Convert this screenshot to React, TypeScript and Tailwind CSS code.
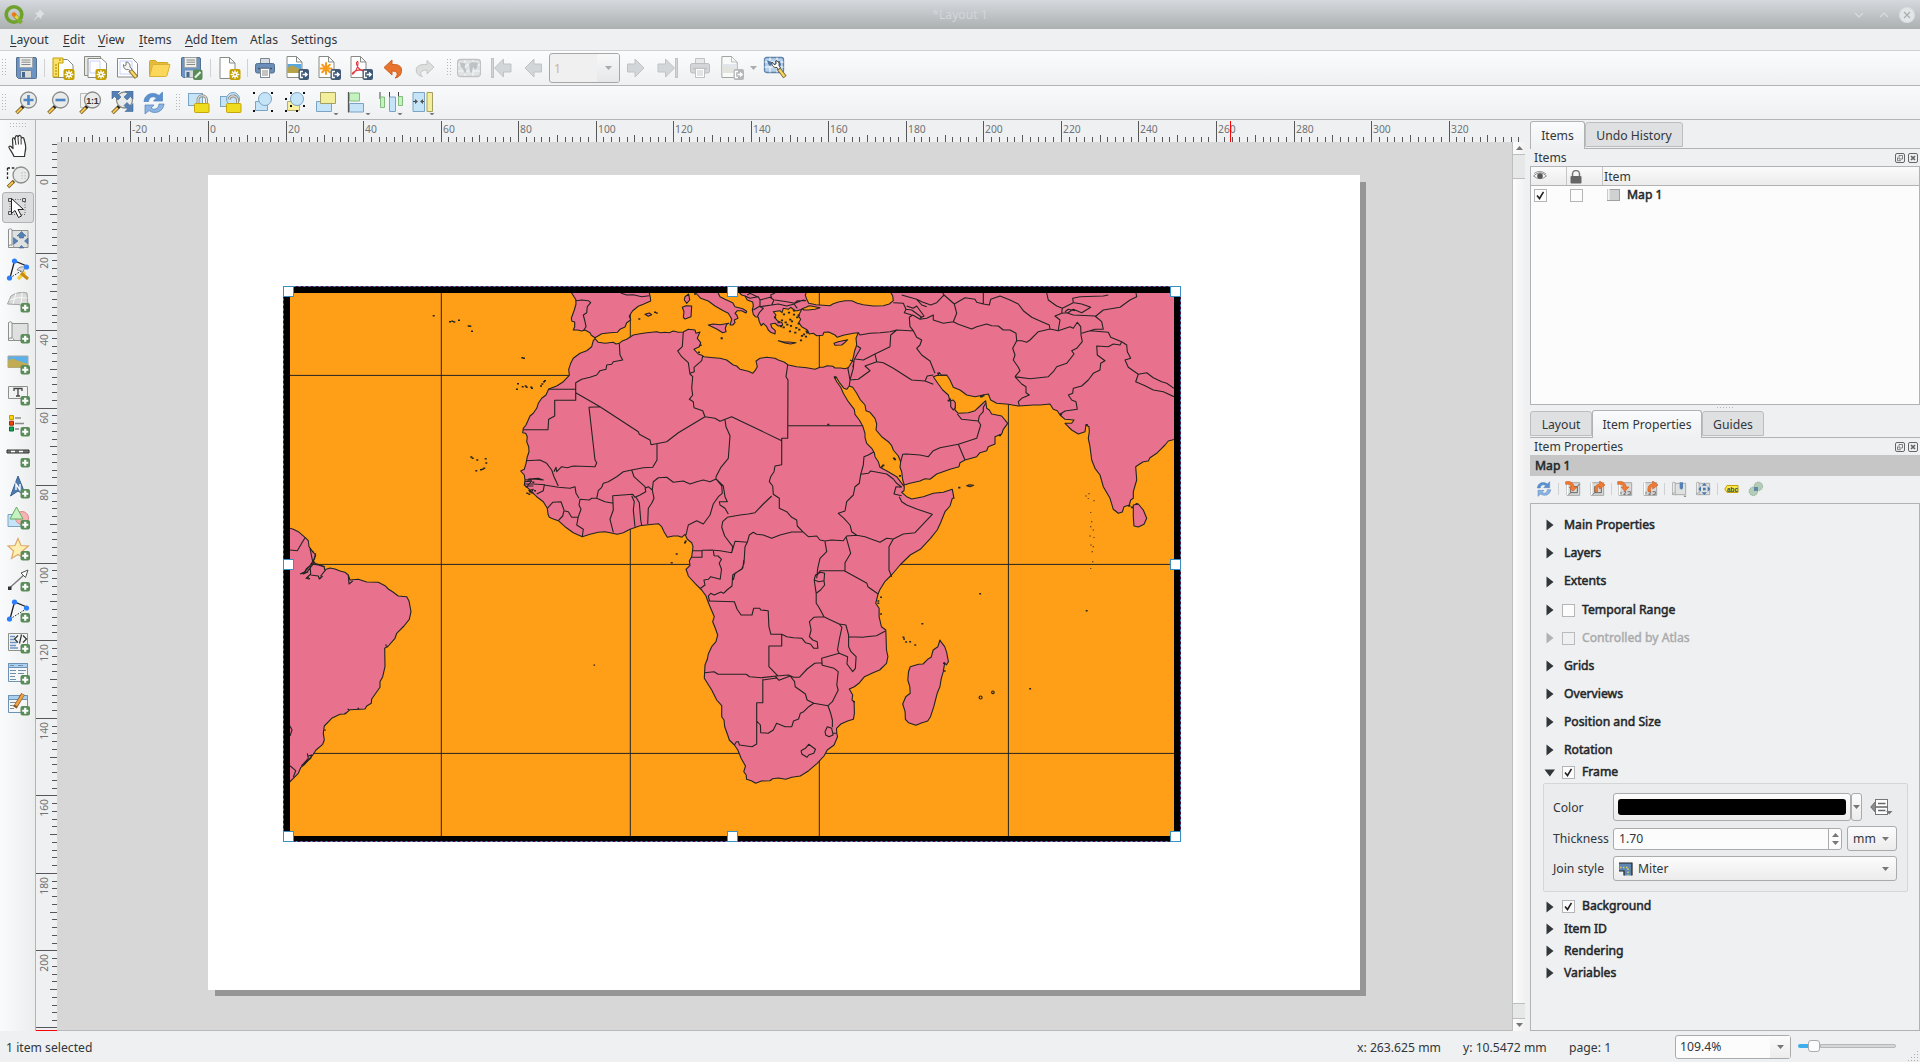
import React from "react";

type Kids = { children?: React.ReactNode };

/* ---------- icon primitives ---------- */

const Ic = ({ children, size = 24 }: Kids & { size?: number }) => (
  <svg width={size} height={size} viewBox="0 0 24 24" fill="none" className="block shrink-0">
    {children}
  </svg>
);

const Plus = () => (
  <g>
    <rect x="14.5" y="14" width="9.500" height="9.500" rx="2" fill="#5a8c5a" />
    <path d="M19.250 15.700v6.100M16.200 18.750h6.100" stroke="#fff" strokeWidth="2.200" />
  </g>
);
const Gear = () => (
  <g>
    <rect x="12.5" y="13" width="11" height="11" rx="2" fill="#c4a000" />
    <path d="M18 14.2v8.6M13.7 18.5h8.6M15 15.5l6 6M21 15.5l-6 6" stroke="#fff" strokeWidth="1.3" />
    <circle cx="18" cy="18.5" r="2.3" fill="#fff" />
    <circle cx="18" cy="18.5" r="1" fill="#c4a000" />
  </g>
);
const ExportBadge = ({ c = "#415a75" }: { c?: string }) => (
  <g>
    <rect x="13.5" y="13" width="10.5" height="11" rx="2" fill={c} />
    <path d="M18 15.5h-2.5v6H18M17.5 18.5h4.5M20 16.5l2.2 2-2.2 2" stroke="#fff" strokeWidth="1.3" />
  </g>
);
const Doc = () => (
  <path d="M4.5 1.5h9.5l5.5 5.5v15.5h-15zM14 1.5v5.5h5.5" fill="#fff" stroke="#888a85" />
);
const Glass = () => (
  <g>
    <path d="M9.5 15L2.5 22" stroke="#5c4a1c" strokeWidth="3.6" />
    <path d="M8 16.5L2.8 21.7" stroke="#fcc94d" strokeWidth="2" />
    <path d="M9.8 14.7l-2 2" stroke="#222" strokeWidth="3" />
    <circle cx="14.5" cy="9" r="8" fill="#e9eaea" stroke="#8a8c8a" strokeWidth="1.3" />
  </g>
);
const Drop = () => <path d="M18.5 22h5l-2.5 2.5z" fill="#777" />;

const Save = () => (
  <Ic>
    <path d="M3 1.5h18q1.5 0 1.500 1.500V21.500q0 1-1 1H4.500L2.500 20.500V2q0-.5.5-.5z" fill="#6b94c4" stroke="#56718f" />
    <rect x="5.500" y="1.500" width="13" height="10" fill="#eeeeec" stroke="#9a9c98" strokeWidth=".7" />
    <path d="M7.500 4h9M7.500 6.200h9M7.500 8.500h9" stroke="#888a85" />
    <rect x="6.500" y="14.500" width="11" height="7.500" rx="1" fill="#d8dad8" stroke="#56718f" strokeWidth=".7" />
    <rect x="8" y="16" width="3" height="5.500" fill="#47678d" />
  </Ic>
);
const SaveAs = () => (
  <Ic>
    <path d="M3 1.500h17q1.500 0 1.500 1.500v18.500h-17L2.500 20V2z" fill="#6b94c4" stroke="#56718f" />
    <rect x="5.500" y="1.500" width="12" height="10" fill="#eeeeec" stroke="#9a9c98" strokeWidth=".7" />
    <path d="M7.500 4h8.500M7.500 6.200h8.500M7.500 8.500h8.500" stroke="#888a85" />
    <rect x="6" y="14.500" width="8" height="7" fill="#d8dad8" />
    <rect x="7.500" y="16" width="3" height="5" fill="#47678d" />
    <rect x="14" y="13.500" width="9.500" height="10.500" rx="2" fill="#5a8c5a" />
    <path d="M16 21.500l5.500-5.500" stroke="#e4f3e4" strokeWidth="2.200" />
  </Ic>
);
const NewLayout = () => (
  <Ic>
    <path d="M2.500 3.500h14l5.500 5.500v12.500H2.500z" fill="#fff" stroke="#888a85" />
    <path d="M2 2h10v5H7.500v14H2z" fill="#fce069" stroke="#c4a000" />
    <path d="M4 9h2M4 12h2M4 15h2M4 18h2M9 3v2" stroke="#a08300" />
    <Gear />
  </Ic>
);
const DupLayout = () => (
  <Ic>
    <path d="M1.500.500h16v19h-16z" fill="#e6e7e6" stroke="#888a85" />
    <path d="M5 2.500h13.500l5 4.500v14.500H5z" fill="#fff" stroke="#888a85" />
    <path d="M7 5h10v12H7z" stroke="#c6d2ff" />
    <Gear />
  </Ic>
);
const Manager = () => (
  <Ic>
    <path d="M2.500 2.500h15l5 5v13.500h-20z" fill="#fff" stroke="#888a85" />
    <path d="M5 5h12v13H5z" stroke="#c6d2ff" />
    <path d="M15 14l6.500 7.500" stroke="#8a7332" strokeWidth="4.200" />
    <path d="M15.500 14.500l5.500 6.500" stroke="#fbd968" strokeWidth="2.400" />
    <path d="M8.500 8.500a4 4 0 0 0 5 5l2 1.500 1.500-2-2-2a4 4 0 0 0-4-5v3l-1.500 1z" fill="#f3f3f2" stroke="#77797a" />
  </Ic>
);
const Folder = () => (
  <Ic>
    <path d="M2.500 20V5.500q0-1 1-1h5l2 2h9.500q1 0 1 1V10" fill="#e5bb3c" stroke="#d3a829" />
    <path d="M2.500 20.500L5.500 9.500q.3-1 1.300-1H23L20 19.500q-.3 1-1.300 1z" fill="#fbd75c" stroke="#d9b137" />
  </Ic>
);
const NewPage = () => (<Ic><g transform="translate(-1.500 0)"><Doc /></g><Gear /></Ic>);
const Printer = ({ gray }: { gray?: boolean }) => (
  <Ic>
    <path d="M7.500 9V2.500h9V9" fill={gray ? "#e8e9ea" : "#d7dde5"} stroke={gray ? "#c0c2c4" : "#7b8791"} />
    <rect x="2.500" y="7.500" width="19" height="9.500" rx="1.800" fill={gray ? "#d3d5d8" : "#6b8fb9"} stroke={gray ? "#bbbdc0" : "#52708f"} />
    <path d="M5 12.500h14" stroke={gray ? "#bcbec1" : "#3e5570"} strokeWidth="1.500" />
    <rect x="7.500" y="12.500" width="9" height="9" fill="#fff" stroke={gray ? "#c0c2c4" : "#7b8791"} />
    <path d="M9 15h6M9 17h6M9 19h6" stroke={gray ? "#c6c8ca" : "#888a85"} />
  </Ic>
);
const ExportImg = ({ gray }: { gray?: boolean }) => (
  <Ic>
    <g transform="translate(-2.500 -1)">
      <Doc />
      <rect x="5" y="9" width="14" height="9" fill={gray ? "#cfdbe3" : "#58a7e0"} />
      <path d="M5 13q4-4 7-1.500l7 3V18H5z" fill={gray ? "#d4d4c8" : "#b8a14b"} />
      {gray && <path d="M4.500 1.500h15v21h-15z" fill="#f3f4f5" opacity=".5" />}
    </g>
    <ExportBadge c={gray ? "#b4b7ba" : "#415a75"} />
  </Ic>
);
const ExportSvg = () => (
  <Ic>
    <g transform="translate(-2.500 -1)">
      <Doc />
      <path d="M11.500 8v11M6 13.500h11M7.700 9.700l7.600 7.600M15.300 9.700l-7.600 7.600" stroke="#f59a1b" strokeWidth="2" strokeLinecap="round" />
    </g>
    <ExportBadge />
  </Ic>
);
const ExportPdf = () => (
  <Ic>
    <g transform="translate(-2.500 -1)">
      <Doc />
      <path d="M10.500 7c-1.500 0 0 5 2.500 7s5 2.500 5 1.500-7-1-10 1-2.500 3-1.500 2.500S11.500 13 11.500 9s-.500-2-1-2z" stroke="#e0383e" strokeWidth="1.100" />
    </g>
    <ExportBadge />
  </Ic>
);
const Undo = () => (
  <Ic>
    <path d="M3 11.500L11 4v4.500c7-.5 11 2 9 9-1 2.500-3 4-6 4.500 3-2.500 3.500-7-3-7V19z" fill="#e8732f" stroke="#d0611f" />
  </Ic>
);
const Redo = () => (
  <Ic>
    <path d="M21 11L14 4.500V8.500C7 8 2 10 3.500 16c.8 2.500 3 4 6 4.500-3-2.500-2.500-6.500 4.500-6.500v4z" fill="#dcdfdd" stroke="#c3c6c4" />
  </Ic>
);
const AtlasIcon = ({ tool }: { tool?: boolean }) => (
  <Ic>
    {tool ? (
      <g>
        <rect x="1.500" y="1.500" width="19" height="15" rx="2" fill="#b5d0ec" stroke="#5f82a9" strokeWidth="1.300" />
        <path d="M1.500 6h19M1.500 11h19M7 1.500v15M14 1.500v15" stroke="#fff" />
        <path d="M4 4.500l4 1 1 2-2 3-2-3zM12 5h5l1 4-3 4-2-3z" fill="#5275a0" />
        <path d="M15 12l7 9" stroke="#70643a" strokeWidth="4" />
        <path d="M15.500 12.500l6 8" stroke="#f7d75d" strokeWidth="2.300" />
        <path d="M9 6a4.300 4.300 0 0 0 5 5.500l1.500 2 2-1.500-1.500-2.500A4 4 0 0 0 13 4.500V8l-2 .5z" fill="#fff" stroke="#444" />
      </g>
    ) : (
      <g>
        <rect x=".500" y="3.500" width="23" height="17" rx="3" fill="#e0e3e5" stroke="#c0c3c5" strokeWidth="1.300" />
        <path d="M1 9h22M1 15h22M8 4v16M16 4v16" stroke="#f6f7f7" />
        <path d="M3 6.500l6 1-1.500 3.500 2 3-1.500 4-2-5-2.500-3zM12 8l3-2 6 1-1 5-2 2-2-3-1 6-2-1-.5-5z" fill="#bfc2c4" />
      </g>
    )}
  </Ic>
);
const Arrow = ({ dir, bar }: { dir: "l" | "r"; bar?: boolean }) => (
  <Ic>
    <g transform={dir === "r" ? "matrix(-1 0 0 1 24 0)" : undefined} fill="#d3d6d9" stroke="#c0c3c6">
      {bar && <rect x="2.500" y="2.500" width="2" height="19" />}
      <path d={bar ? "M5.500 12L14.500 3v5h7.500v8h-7.500v5z" : "M4 12L13 3v5h7.500v8H13v5z"} />
    </g>
  </Ic>
);
const ZoomIn = () => (<Ic><Glass /><path d="M14.500 4v10M9.500 9h10" stroke="#4a86c5" strokeWidth="2.600" /></Ic>);
const ZoomOut = () => (<Ic><Glass /><path d="M9.500 9h10" stroke="#4a86c5" strokeWidth="2.600" /></Ic>);
const ZoomOne = () => (
  <Ic>
    <path d="M2.500 2.500h8v14h-8z" fill="#f3f3f3" stroke="#b8bab8" />
    <Glass />
    <text x="8.300" y="12.500" fontSize="9" fontWeight="bold" fill="#333" fontFamily="Liberation Sans" textLength="12.500">1:1</text>
  </Ic>
);
const ZoomFull = () => (
  <Ic>
    <Glass />
    <path d="M2 0h8l-2.500 2.500L11 6 8 9 4.500 5.500 2 8zM23 0h-8l2.500 2.500L14 6l3 3 3.500-3.500L23 8zM23 20.500h-8l2.500-2.500-3.500-3.500 3-3 3.500 3.500 2.500-2.500z" fill="#5580b4" stroke="#3f6797" strokeWidth=".6" />
  </Ic>
);
const Refresh = ({ size }: { size?: number }) => (
  <Ic size={size}>
    <path d="M2 10.500C2.500 3 11 0 17 4.500l3.500-3.500V10h-9l3-3C11 4.500 7 6 6.500 10.500z" fill="#5c91cf" stroke="#4a7fbe" strokeWidth=".7" />
    <path d="M22 13C21.500 20.500 13 24 7 19.500L3 23V14h9l-3 3c3.500 2.500 7.500 1 8-4z" fill="#8db4e0" stroke="#4a7fbe" strokeWidth=".7" />
  </Ic>
);
const Lock = ({ open }: { open?: boolean }) => (
  <Ic>
    {open ? (
      <g fill="#c6e4f8" stroke="#7ba4c4"><rect x="1.500" y="5.500" width="11" height="10" /><circle cx="14" cy="8" r="6.500" /></g>
    ) : (
      <rect x="1.500" y="2.500" width="14" height="12" fill="#c6e4f8" stroke="#7ba4c4" />
    )}
    <path d={open ? "M10 8.500a4 4 0 0 1 8.500 1.500v4" : "M11 13V9a4 4 0 0 1 8.500 0v4"} stroke="#8b8d8a" strokeWidth="3" />
    <path d={open ? "M10 8.500a4 4 0 0 1 8.500 1.500v4" : "M11 13V9a4 4 0 0 1 8.500 0v4"} stroke="#e4e5e3" strokeWidth="1.200" />
    <rect x="7.500" y="12.500" width="14.500" height="9" rx="1" fill="#f0dc1e" stroke="#c2a60b" />
  </Ic>
);
const Group = () => (
  <Ic>
    <path d="M4.500 10.500h12v9h-12z" fill="#c6e4f8" stroke="#7ba4c4" />
    <circle cx="14" cy="8" r="6.500" fill="#c6e4f8" stroke="#7ba4c4" />
    <path d="M2 1h2v2H2zM20 1h2v2h-2zM2 19h2v2H2zM20 19h2v2h-2z" fill="#111" />
  </Ic>
);
const Ungroup = () => (
  <Ic>
    <path d="M4.500 10.500h12v9h-12z" fill="#f7f0a0" stroke="#b5ac6d" />
    <circle cx="14" cy="8" r="6.500" fill="#c6e4f8" stroke="#7ba4c4" />
    <path d="M7 1h2v2H7zM20 1h2v2h-2zM2 7h2v2H2zM7 14h2v2H7zM2 19h2v2H2zM13 19h2v2h-2zM20 14h2v2h-2z" fill="#111" />
  </Ic>
);
const Raise = () => (
  <Ic>
    <path d="M1.500 10.500h15v10h-15z" fill="#c6e4f8" stroke="#7ba4c4" />
    <path d="M5.500 1.500h15v11h-15z" fill="#f3ee9b" stroke="#a39f63" />
    <Drop />
  </Ic>
);
const Align = () => (
  <Ic>
    <path d="M1.500 1v20.500" stroke="#555" strokeWidth="1.300" />
    <path d="M2.500 2h10v8h-10z" fill="#c5f3c0" stroke="#83bb80" />
    <path d="M2.500 12.500h14v8.500h-14z" fill="#c6e4f8" stroke="#7ba4c4" />
    <Drop />
  </Ic>
);
const Distribute = () => (
  <Ic>
    <path d="M1 1v7M10.500 1v7M19.500 1v6" stroke="#444" />
    <path d="M1.500 6h4v10.500h-4zM19.500 5.500h4v9h-4z" fill="#c5f3c0" stroke="#83bb80" />
    <path d="M10.500 6h6v14.500h-6z" fill="#c6e4f8" stroke="#7ba4c4" />
    <Drop />
  </Ic>
);
const Resize = () => (
  <Ic>
    <path d="M2 1.500h11.500v19H2z" fill="#c6e4f8" stroke="#7ba4c4" />
    <path d="M16 1.500h5.500v19H16z" fill="#f3ee9b" stroke="#a39f63" />
    <path d="M2 10.500h3M13 10.500h-3" stroke="#444" /><path d="M4 8l3 2.500L4 13zM12 8l-3 2.500 3 2.500z" fill="#555" />
    <Drop />
  </Ic>
);

/* left tool box */
const Hand = () => (
  <Ic>
    <path d="M8 22.500C7 20 5 17 3.500 14.500 2 12.500 3.500 11.500 5 12.500l2 2L6.500 5.500c0-2 2-2 2.300-.3L9.500 3c.3-1.800 2.200-1.800 2.400 0l.6-.5c.4-1.500 2.300-1.300 2.500.3l.5 1.400c.8-1 2.200-.7 2.500.8l1.500 6c.6 3 .2 5-.5 7.500l-.5 4z" fill="#fff" stroke="#333" strokeWidth="1.200" strokeLinejoin="round" />
    <path d="M9 5l1 6M12 3.500l.5 7M15 4.500l.2 6" stroke="#333" />
  </Ic>
);
const ZoomTool = () => (
  <Ic>
    <path d="M1.500 3h9M1.500 3v13" stroke="#222" strokeDasharray="2.500 1.800" strokeWidth="1.300" />
    <path d="M8 16l-6 6" stroke="#6a5620" strokeWidth="3.400" /><path d="M7 17l-4.500 4.500" stroke="#fcc94d" strokeWidth="1.800" />
    <circle cx="15" cy="10" r="8" fill="#e8e9e9" stroke="#8a8c8a" strokeWidth="1.300" />
    <path d="M16 7v7M19 7v7" stroke="#bbb" strokeDasharray="1.500 1.500" />
  </Ic>
);
const SelectTool = () => (
  <Ic>
    <path d="M4 3.500h15v15H4z" stroke="#666" strokeDasharray="1 1.500" />
    <path d="M2.500 2.500h3v3h-3zM16.500 2.500h3v3h-3zM2.500 15.500h3v3h-3z" fill="#ddd" stroke="#555" />
    <path d="M5.500 2.500v15l3.500-3 3.500 7 3-1.500-3.500-6.500h5.500z" fill="#fff" stroke="#222" strokeLinejoin="round" />
  </Ic>
);
const MapArt = () => (
  <g>
    <path d="M5.500 3.500h16.500v17H5.500z" fill="#dfe0e0" stroke="#8e908e" />
    <path d="M2.500 2.500q2-1.500 3.500 0v15.500H4q-2 0-1.500 2.500z" fill="#f6f6f6" stroke="#8e908e" />
    <path d="M2.500 20.500h5q1-1.500-1-2.500" fill="#f6f6f6" stroke="#8e908e" />
  </g>
);
const MoveContent = () => (
  <Ic>
    <MapArt />
    <path d="M15.500 4.500l4.500 4.500h-2.500v2h-4V9H11zM15.500 18.500l2.500 2.500h-5zM7.500 10.500l4.500 3.500-4.500 3.500zM22 11l-3.500 3 3.500 3z" fill="#5580b4" stroke="#3f6797" strokeWidth=".6" />
  </Ic>
);
const NodeDots = () => (
  <g fill="#2a7fff"><circle cx="8.500" cy="3" r="2.600" /><circle cx="20.500" cy="9" r="2.600" /><circle cx="3.500" cy="20" r="2.600" /></g>
);
const EditNodes = () => (
  <Ic>
    <path d="M4 20L8.500 3 22 8.500" stroke="#222" strokeWidth="1.300" /><path d="M4 20L22 8.500" stroke="#222" strokeDasharray="1.500 1.500" />
    <path d="M12 21l7-7" stroke="#f3cf35" strokeWidth="3.200" /><path d="M22 21l-7-6" stroke="#c98a12" strokeWidth="3" />
    <path d="M11 12q2-4 8-3l-2 5q-3-2-6-2z" fill="#d7d8d7" stroke="#8e908e" />
    <NodeDots />
  </Ic>
);
const Map3D = () => (
  <Ic>
    <path d="M5 7q7-5 16-3l1 13q-10-2-20.500-2z" fill="#d9dada" stroke="#a0a2a0" />
    <path d="M3.500 11q9-4 18-2M10 4L7 15M16 3.500L15 16" stroke="#f8f8f8" />
    <Plus />
  </Ic>
);
const AddMap = () => (<Ic><MapArt /><Plus /></Ic>);
const AddPic = () => (
  <Ic>
    <path d="M2 5h20v11.500H2z" fill="#5bb0ea" stroke="#a4a6a4" /><path d="M2 10q4-4 8-1l12 4v3.500H2z" fill="#c2ac53" />
    <Plus />
  </Ic>
);
const AddLabel = () => (
  <Ic>
    <path d="M2.500 4.500h19v12h-19z" fill="#f2f2f2" stroke="#8e908e" />
    <path d="M8 9V6.500h8V9M12 6.500v7.500M10 14h4" stroke="#444" strokeWidth="1.300" />
    <Plus />
  </Ic>
);
const AddLegend = () => (
  <Ic>
    <path d="M3.500 2.500h4v4h-4z" fill="#fcd20b" stroke="#c79a00" /><path d="M3.500 8.200h4v4h-4z" fill="#f0440c" stroke="#a12c00" /><path d="M3.500 14h4v4h-4z" fill="#10a754" stroke="#066b32" />
    <path d="M9 5h6M9 10.500h9M9 16h4" stroke="#8a8c8a" strokeWidth="1.500" />
    <Plus />
  </Ic>
);
const AddScale = () => (
  <Ic>
    <path d="M1 6h22v3H1z" fill="#777" stroke="#333" /><path d="M5 7.500h4M13 7.500h4" stroke="#fff" strokeWidth="1.500" />
    <Plus />
  </Ic>
);
const AddNorth = () => (
  <Ic>
    <path d="M12 1L20 21l-8-5-7.500 5z" fill="#4f7cb0" stroke="#3a6191" />
    <path d="M10 15V9l4 6V9" stroke="#fff" strokeWidth="1.400" />
    <Plus />
  </Ic>
);
const AddShape = () => (
  <Ic>
    <path d="M2 8.500h13v12H2z" fill="#c6e4f8" stroke="#7ba4c4" /><circle cx="16" cy="12" r="6.500" fill="#f6b5b5" stroke="#dc8a8a" />
    <path d="M10.500 1L17 13H4z" fill="#c5f3c0" stroke="#68a965" />
    <Plus />
  </Ic>
);
const AddMarker = () => (
  <Ic>
    <path d="M12 1.500l3 7 7.500.500-6 5 2 7.500-6.500-4-6.500 4 2-7.500-5.500-5 7-.500z" fill="#fdeeb2" stroke="#e0a868" strokeWidth="1.200" />
    <Plus />
  </Ic>
);
const AddArrow = () => (
  <Ic>
    <path d="M3.500 20L19 6" stroke="#777" strokeWidth="1.300" /><path d="M2 18.500h3.500V22H2z" fill="#333" /><path d="M22 2l-7 3 4.500 4.500z" fill="#fff" stroke="#555" />
    <Plus />
  </Ic>
);
const AddNode = () => (
  <Ic>
    <path d="M4 20L8.500 3 22 8.500" stroke="#222" strokeWidth="1.300" /><path d="M4 20L21 9.500" stroke="#222" strokeDasharray="1.500 1.500" />
    <NodeDots />
    <Plus />
  </Ic>
);
const AddHtml = () => (
  <Ic>
    <path d="M2.500 3.500h19v17h-19z" fill="#f4f4f4" stroke="#8e908e" />
    <path d="M4 6.500h5M4 9.500h4M4 12.500h7M4 15.500h6M4 18h8" stroke="#6b94c4" strokeWidth="1.500" />
    <path d="M12 5.500L8.500 9 12 12.500M17 5.500L20.500 9 17 12.500M15.500 4.500L13.500 13.500" stroke="#333" strokeWidth="1.200" />
    <Plus />
  </Ic>
);
const AddTable = () => (
  <Ic>
    <path d="M2.500 2.500h19v18h-19z" fill="#f6f6f6" stroke="#6d92b5" /><path d="M2.500 2.500h19v4h-19z" fill="#aad0ef" stroke="#6d92b5" />
    <path d="M4 4.500h4M12 4.500h5M4 9.500h6M12 9.500h8M4 12.500h6M12 12.500h6M4 15.500h5M4 18.500h6" stroke="#6f8fae" />
    <Plus />
  </Ic>
);
const AddManual = () => (
  <Ic>
    <path d="M2.500 3.500h19v17h-19z" fill="#f6f6f6" stroke="#6d92b5" /><path d="M2.500 3.500h19v4h-19z" fill="#aad0ef" stroke="#6d92b5" />
    <path d="M4 10.500h6M4 13.500h5M4 16.500h4" stroke="#8a8c8a" />
    <path d="M9 15.500L17 2" stroke="#8b5a1e" strokeWidth="4" /><path d="M10 13.500L17 2.500" stroke="#f0a54a" strokeWidth="2.400" />
    <Plus />
  </Ic>
);

/* item property tool icons */
const Frame = ({ k }: { k: "in" | "out" | "nin" | "nout" }) => (
  <Ic size={16}>
    <path d="M3 2.500h19v19H3z" fill="#d7d8d8" stroke="#9c9e9c" strokeWidth="1.300" />
    <path d="M4 2v19" stroke="#fff" strokeWidth="2" />
    {k === "in" || k === "out" ? <path d="M8.500 8.500h10v9h-10zM18.500 8.500l3-4M8.500 17.500l-3 3" stroke="#555" strokeWidth="1.300" /> : <path d="M6 20v-4M10 16h3v2l-3 2h3M16 16h4v4h-4" stroke="#666" strokeWidth="1.300" />}
    {k === "in" || k === "nin" ? (
      <path d="M1 1q11-2 13 8h4l-6 6.500L6 9h4Q9 4 1 5z" fill="#ef7b35" stroke="#d0611f" />
    ) : (
      <path d="M9 16Q7.500 5 16 4.500V0l8 6-8 6V8q-4 .5-3 8z" fill="#ef7b35" stroke="#d0611f" />
    )}
  </Ic>
);

const Chevron = ({ c = "#777" }: { c?: string }) => (
  <svg width="7" height="4" viewBox="0 0 7 4" className="block shrink-0"><path d="M0 0h7L3.500 4z" fill={c} /></svg>
);

const Handle = ({ w }: { w: string }) => (
  <div className={`${w} flex h-full shrink-0 items-center`}>
    <svg width="7" height="20" className="block">
      <g fill="#b4b6b8">
        {[0, 1, 2, 3, 4, 5].map((i) => (
          <g key={i}><rect x="2" y={1 + i * 3} width="1" height="1" /><rect x="5" y={1 + i * 3} width="1" height="1" /></g>
        ))}
      </g>
    </svg>
  </div>
);
const Sep = ({ w }: { w: string }) => (
  <div className={`${w} flex shrink-0 justify-center`}><div className="h-[18px] w-px bg-[#cfd1d3]" /></div>
);
const Cell = ({ children }: Kids) => <div className="flex w-8 shrink-0 items-center justify-center pr-px">{children}</div>;

/* ---------- map geometry ---------- */

/* Each sheet is digitised in its own local units: origin x, origin y, units per pixel in x and y. */
const sheets = {
  A: [280, 280, 3, 3],
  B: [720, 280, 3, 3],
  C: [280, 500, 3, 3],
  D: [660, 520, 2.958, 3],
} as const;
type Sheet = keyof typeof sheets;

const project = (s: Sheet, pts: string) => {
  const [ox, oy, kx, ky] = sheets[s];
  return pts
    .trim()
    .split(/\s+/)
    .map((p) => {
      const [x, y] = p.split(",").map(Number);
      return `${(ox + x / kx).toFixed(1)} ${(oy + y / ky).toFixed(1)}`;
    })
    .join("L");
};
const ring = (...parts: [Sheet, string][]) => "M" + parts.map(([s, p]) => project(s, p)).join("L") + "Z";
const lines = (s: Sheet, list: string[]) => list.map((l) => "M" + project(s, l)).join("");

const mainland =
  ring(
    ["B", "50,30 65,45 75,48 82,60 98,66 100,78 97,90 100,103 106,110 115,112 118,125 124,137 130,130 140,140 145,150 152,157 165,162 166,152 155,142 152,132 165,130 175,138 188,136 186,128 172,122 164,112 168,105 160,95 180,92 186,98 190,85 205,88 212,82 225,92 232,92 245,88 240,98 235,108 242,118 236,128 245,140 262,150 268,162 280,160 290,167 308,166 312,157 326,156 345,165 352,172 370,166 385,163 400,160 415,158 408,175 410,195 404,212 400,232 396,245 385,263 374,266 362,264 345,264 338,259 322,257 310,262 300,262 285,268 260,263 230,260 205,255 192,246 175,240 165,235 140,232 120,235 108,243 112,260 105,272 98,280 85,274 60,268 50,258 40,255 20,240 0,235"],
    ["A", "1300,233 1272,230 1265,226 1255,222 1242,208 1258,200 1262,188 1252,175 1256,164 1260,156 1248,160 1245,150 1225,148 1210,156 1195,157 1180,153 1168,158 1155,157 1142,158 1130,155 1100,158 1080,161 1060,165 1040,178 1025,184 1018,190 1008,192 1000,187 975,190 955,187 945,176 940,182 935,200 920,212 900,220 880,235 872,250 866,268 868,286 850,305 830,318 806,327 798,345 785,355 775,370 770,385 760,400 750,408 738,435 730,445 728,458 737,460 742,470 740,485 746,500 747,515 742,530 738,550 733,568 722,573 733,585 735,600 733,615 745,625 760,640 770,650 790,665 802,685 804,703 808,712 820,717 835,722 855,740 880,758 907,770 930,763 955,757 975,755 990,758 1012,763 1030,758 1050,748 1080,737 1105,734 1135,731 1145,740 1152,755 1162,772 1180,768 1195,768 1205,772 1215,763 1222,778 1235,788 1239,800 1235,830 1228,843 1230,856 1218,868 1222,878"],
    ["C", "1225,228 1245,250 1265,270 1278,288 1284,305 1292,325 1303,350 1298,365 1306,385 1313,405 1308,425 1295,440 1285,462 1282,478 1275,495 1273,535 1295,570 1310,600 1325,617 1325,650 1332,660 1334,680 1343,705"],
    ["D", "205,660 220,675 230,690 240,715 253,738 248,755 255,765 256,778 270,782 283,790 300,783 325,782 333,776 350,774 372,778 390,772 415,768 440,752 465,730 485,708 495,690 515,675 525,650 523,640 522,625 535,612 555,603 572,598 575,580 574,545 568,540 570,525 560,507 575,500 590,488 605,470 630,458 650,450 670,430 674,410 670,390 668,330 655,320 648,290 648,265 638,250 645,222 650,210 665,185 685,165 710,135 740,105 770,88 800,55 820,30 830,8"],
    ["B", "675,695 690,678 697,655 702,655 697,628 670,637 640,640 610,650 575,657 560,650 545,637 552,632 553,620 545,610 530,590 505,575 480,562 475,545 465,530 463,518 455,505 440,490 435,472 435,460 428,438 418,420 405,403 403,388 385,365 370,340 362,322 350,305 343,290 348,290 358,307 372,325 380,328 388,318 398,322 410,340 420,358 435,375 438,392 450,397 465,415 470,432 468,450 485,470 505,485 515,497 520,510 535,528 542,545 540,562 545,575 548,600 553,615 570,610 600,603 615,596 630,598 650,582 690,568 717,560 720,548 735,540 770,530 780,518 800,512 805,500 825,492 825,470 845,462 850,448 863,430 845,408 815,402 808,390 800,385 797,362 780,378 765,392 745,398 715,400 705,390 705,378 690,362 685,345 668,330 655,312 640,290 655,285 658,278 664,285 680,285 690,300 700,322 720,330 740,345 765,350 790,345 805,342 812,360 830,370 865,373 895,378 940,375 960,375 990,372 1000,388 1012,392 1020,405 1035,418 1062,420 1055,430 1035,430 1055,450 1075,462 1095,455 1098,435 1107,440 1108,455 1105,475 1110,500 1115,540 1125,565 1140,585 1150,620 1170,655 1180,688 1195,700 1207,696 1212,680 1228,675 1232,660 1240,655 1240,635 1250,600 1247,560 1258,553 1270,545 1285,543 1290,533 1310,520 1335,495 1345,483 1375,475 1375,30"]
  ) +
  ring(["B", "262,30 256,45 260,58 266,70 288,74 330,77 338,72 355,66 375,62 395,62 412,70 430,74 460,78 490,77 508,72 520,62 518,48 508,30"]);

const landRings = [
  ring(["A", "868,30 877,42 883,52 887,58 888,72 883,90 874,115 876,124 884,126 884,140 880,150 893,150 905,153 915,150 930,158 934,166 945,173 965,161 990,158 1012,157 1020,148 1035,141 1040,128 1052,120 1048,108 1058,92 1075,79 1090,73 1112,63 1111,52 1106,30"]),
  ring(["A", "1235,30 1250,42 1262,55 1285,63 1305,78 1330,92"], ["B", "25,100 32,112 35,118 30,135 38,135 45,128 43,120 54,115 50,105 45,100 52,92 65,92 78,99 80,94 68,86 45,80 38,68 15,58 0,50 -10,30"]),
  ring(["A", "1285,135 1300,132 1320,134 1346,130"], ["B", "20,133 16,145 18,155 8,158 -10,147"]),
  ring(["A", "1215,50 1226,42 1229,60 1220,70 1213,60"]),
  ring(["A", "1207,82 1218,77 1235,78 1233,110 1215,117 1210,112 1212,95"]),
  ring(["A", "1095,103 1108,99 1115,104 1105,109"]),
  ring(["B", "342,190 355,185 383,179 372,190 365,195 345,196"]),
  ring(["B", "175,182 190,185 205,186 228,188 212,192 195,189"]),
  ring(["B", "1240,675 1255,672 1270,690 1280,715 1272,733 1255,741 1242,738 1240,710"]),
  ring(["B", "740,617 748,614 761,616 750,620"]),
  ring(["B", "692,362 700,360 706,368 706,382 700,390 692,380"]),
  ring(["D", "828,360 833,368 842,380 848,398 853,425 847,435 842,428 838,455 832,475 828,500 820,520 810,560 800,590 792,603 775,608 757,616 735,608 726,598 725,575 718,552 727,530 740,520 739,500 733,480 735,455 740,440 765,433 778,432 792,418 802,412 808,390 822,380"]),
  ring(["C", "20,82 40,88 55,95 75,112 85,122 87,140 98,155 107,165 103,178 93,192 115,195 132,200 135,212 122,228 138,208 150,204 165,207 180,213 195,217 205,225 210,240 235,238 260,246 295,247 315,257 325,267 340,277 355,288 380,290 387,303 393,335 388,358 372,378 350,400 345,415 325,438 314,445 315,500 308,530 300,545 300,562 275,597 274,610 260,618 255,627 210,629 195,642 180,643 155,655 133,678 130,700 133,720 128,733 108,750 100,763 75,792 62,803 55,820 40,835 20,855"]),
];

const borders =
  lines("A", [
    "888,62 905,60 925,62 932,68 922,80 920,98 910,105 915,125 918,140 910,152", "1022,39 1040,45 1060,44 1085,50 1108,47",
    "1018,190 1020,225 1028,240 1000,245 995,253 980,255 978,268 960,272 950,285 930,292 905,298 887,308 887,361 824,361 824,408 806,418 804,449 730,449", "806,328 887,328",
    "887,338 925,360 960,380 1075,455 1078,463 1110,480 1113,494 1160,485 1195,458 1275,410 1268,392 1242,383 1240,365 1228,358 1238,345 1235,325 1238,290 1230,282 1225,248 1205,230 1193,213 1207,200 1210,156",
    "1230,280 1243,275 1242,262 1265,242 1268,228", "1275,410 1305,415 1320,424", "1335,420 1338,440 1350,467 1345,535 1322,563 1308,590",
    "960,380 927,382 945,540 950,548 945,560 880,558 862,563 845,560 830,575 828,562 822,575", "738,542 780,540 800,550 815,570 822,590 835,618",
    "1131,492 1131,540 1118,562 1090,563 1055,570 1030,575 1010,590 985,605 970,610 965,622 955,632 950,655 975,665 1000,670",
    "1055,570 1062,590 1075,602 1095,620 1097,635 1080,645 1065,652 1058,643 998,647 1000,690 990,718 1000,757", "1055,647 1063,665 1060,690 1065,740", "1068,652 1078,668 1082,720 1085,736",
    "1095,625 1105,620 1117,630 1122,655 1115,670 1105,685 1103,732", "1117,630 1120,605 1135,593 1160,592 1180,607 1210,603 1230,612 1250,605 1270,600 1290,605 1308,597 1325,618 1327,640 1315,650 1300,672 1290,705 1270,732 1250,722 1225,735 1218,765",
    "1308,590 1308,597 1330,618 1335,650 1342,665 1318,665 1320,675 1335,685 1345,702",
    "950,655 935,655 928,660 900,658 897,675 903,688 895,710 890,735 910,748 907,770", "835,722 848,708 852,692 865,695 875,712 893,712", "802,685 818,667 843,665 852,690",
    "770,642 790,632 793,615 835,622 870,625 885,620 888,640 897,655", "733,612 760,612 795,614", "735,600 760,597 790,600 775,595 745,597",
    "1238,812 1266,812 1266,832 1233,832", "1266,811 1300,810", "735,605 755,603 742,618 760,618", "745,632 760,628 752,640",
  ]) +
  lines("B", [
    "203,255 198,290 204,300 203,475 185,475 185,554 165,558 162,575 152,590 148,605 158,618 160,643 178,655 178,685 200,695 215,712 230,720 232,738 248,755", "203,437 428,437",
    "0,424 35,410 60,422 185,482",
    "462,515 445,525 432,530 430,555 422,583 418,610 405,620 400,645 380,665 375,693 355,700 372,715 390,735 395,755 410,766", "422,583 445,580 452,573 500,582 520,597 530,610 545,622",
    "545,622 528,620 522,642 545,647", "538,650 545,665 560,675 590,687 637,703 585,758 550,762 520,777 500,775 480,787 455,778 435,770 410,766",
    "248,755 265,770 290,768 300,780 315,783 335,780 370,782 380,768 410,766", "248,755 215,756 180,765 155,775 130,765 110,763 100,757 88,765 82,787 45,784 35,818",
    "155,648 130,672 105,698 85,702 60,705 22,712", "22,712 8,725 5,742 14,768 38,800 35,818 0,812 -20,811", "82,787 75,800 72,850 65,868 45,880 40,900",
    "315,785 320,815 300,835 293,865 290,895", "378,770 392,820 375,848 375,872 300,872 290,888", "520,777 507,800 507,870 515,890",
    "415,158 420,165 450,160 480,158 510,155 530,150 570,152 580,152", "580,152 570,140 568,112 578,105 600,118 620,115 640,105 640,120 670,130 700,125 710,100 703,72 672,45 665,52 650,68 632,75 605,65 590,58 545,45",
    "520,68 550,70 558,88 553,98 575,105", "560,78 580,85 590,78 612,108 600,115", "558,88 575,90 605,112", "590,58 605,75 620,80", "668,39 672,45",
    "700,125 715,133 755,147 770,140 800,132 815,137 835,138 850,150 870,150 888,160 890,182 878,205 885,225 880,240 895,262 900,272 885,290", "703,72 735,53 765,58 770,67 790,72 790,39", "790,72 808,75 812,58 840,48 870,60 895,72 910,92 935,112 965,125 988,135 990,148",
    "890,182 905,182 920,187 930,180 955,155 990,147 1015,152 1050,140 1060,145 1072,127 1082,140 1083,165 1087,185 1070,205 1055,212 1062,222 1040,250 1010,260 1000,275 985,290 930,296 885,290",
    "885,290 905,312 918,320 918,338 928,345 905,355 895,365 898,378", "1085,160 1110,152 1165,157 1172,172 1205,185 1200,195 1180,192 1165,200 1130,198 1132,225 1155,242 1142,250 1140,270 1120,280 1105,300 1085,318 1060,325 1058,340 1045,345 1055,360 1068,365 1072,388 1035,393 1020,403",
    "1205,185 1220,195 1222,215 1232,235 1215,240 1225,262 1255,283 1280,278 1300,293 1325,305 1340,310 1362,325", "1255,283 1247,305 1275,317 1300,330 1330,335 1362,350",
    "980,39 985,60 1010,78 1027,85 1060,68 1058,55 1080,50 1150,48 1165,45", "1125,110 1150,90 1200,82 1230,60 1250,50 1248,39", "1027,85 1025,100 1005,108 1020,120 1015,150", "1042,100 1060,88 1085,98 1112,82 1085,72 1062,68", "1025,100 1040,98 1060,105 1125,108 1145,125 1150,148 1125,148 1110,152", "1035,95 1045,88 1065,92",
    "530,150 512,165 510,200 465,222 470,245 490,248 520,265 575,300 615,303 640,313", "465,222 430,240 405,237", "615,303 622,288 640,285", "580,152 590,172 605,180 600,195 590,205 605,225 630,243 645,280", "470,245 435,258 450,272 415,298 390,300 400,265 402,240", "383,262 390,300 388,318", "412,198 422,205 410,225 402,240", "390,240 402,245 398,262",
    "542,545 548,523 560,522 600,525 625,530 640,512 660,503 715,493 770,475 782,435 775,423 725,418 712,402", "775,423 778,408 790,395 790,382 797,370", "715,493 735,540",
    "75,48 90,55 115,50 120,60 120,78 100,90", "120,60 150,52 162,60 155,75 120,80 130,85 118,98 112,110", "155,55 152,45 165,39", "155,75 175,72 200,78 222,72 232,85", "165,60 200,65 225,70 250,60 258,62", "222,72 232,62 256,62", "82,45 90,40 115,52",
  ]) +
  lines("D", [
    "158,93 160,107 172,108 182,118 175,130 182,148 178,178 150,170 143,178 130,180 133,195 120,205",
    "245,145 215,165 213,198 198,210 188,220 180,216 160,225 150,220 143,228 147,245", "248,120 245,145", "143,243 220,245 228,268 240,285 272,285 277,265 295,265 298,270 320,272 322,320 328,343 360,343 360,378 322,378 322,440 348,467",
    "132,458 160,455 172,463 255,463 265,470 300,473 345,468 380,465 395,472 412,472", "340,468 352,481 385,468", "304,480 345,474", "304,478 304,548 286,548 286,672 272,680 235,675 232,665 226,665 220,675",
    "385,468 398,485 400,500 430,522 435,540 455,550 440,560 425,575 415,580 410,597 395,603 390,620 370,620 345,610 335,630 320,640 298,638 297,615 286,603",
    "455,550 497,557 510,545 527,510 523,495 527,455 515,445 480,436 478,428 458,430 435,447 412,472", "497,557 505,580 510,600 510,622", "488,635 495,620 508,625 512,645 500,650 490,645 488,635", "510,640 523,640",
    "417,692 430,685 440,673 460,688 455,700 440,705 435,712 420,703 417,692", "360,343 375,350 395,353 420,355 430,368 445,372 455,385 467,385 465,365 452,360 442,350 447,330 442,305 455,292 485,290 500,298 530,312 538,322 530,360 525,390 530,400 478,415 480,436",
    "530,312 550,315 558,345 558,380 565,395 580,410 578,445 570,455 553,432 555,410 530,400", "558,350 600,352 610,350 640,347 667,333", "485,290 470,262 462,250 462,220 456,180 470,185 485,182 487,160 475,157 460,165 456,180", "485,182 487,195 475,210 462,220", "545,152 580,172 612,190 615,200 645,222",
  ]) +
  lines("C", [
    "75,113 65,130 52,152 30,150", "107,160 100,185 75,215 60,222", "98,190 80,205 70,222 85,215", "105,185 82,215 64,221", "90,195 92,222 78,235 88,237", "92,225 115,228 118,237 128,228", "135,200 105,190 98,185 90,145", "205,225 207,252 218,243", "30,678 36,690 30,708", "30,797 47,812 40,832", "82,760 85,775 65,797 92,775 95,765 85,768",
  ]);

const dotsAt = (s: Sheet, list: string, r = 0.8) =>
  list.split(" ").map((p) => {
    const [x, y] = p.split(",").map(Number);
    const [ox, oy, kx, ky] = sheets[s];
    return `M${(ox + x / kx - r).toFixed(1)} ${(oy + y / ky - r * 0.8).toFixed(1)}h${r * 2}v${r * 1.6}h${-r * 2}z`;
  }).join("");

const islets =
  dotsAt("A", "461,107 510,125 517,124 523,126 537,121 566,138 571,139 576,154 727,233 732,235 714,311 711,328 728,320 737,318 740,322 756,325 754,322 783,318 787,312 792,305 795,302 574,531 578,535 592,540 617,536 619,549 603,569 608,568 613,565 589,572 1078,117 1125,97 1130,99 1325,174 1215,788 1217,784 1190,822 1175,848 1257,217 1262,196 1245,42 745,603 752,600 760,607 740,620 750,635 757,638 765,632 742,640 748,643", 1) +
  dotsAt("B", "192,103 207,98 222,104 236,106 211,119 216,124 197,127 183,139 191,142 210,154 226,158 229,144 238,149 186,121 213,138 236,131 252,163 258,170 243,181 176,127 202,134 222,92 232,112 260,154 262,158 246,168 165,112 718,623 486,560 490,556 522,535 525,538 540,588 325,434 655,280 690,358 686,362 783,350 790,347 786,349 840,466 1228,678 1236,682 1250,672 5,175 345,293 1100,435 1023,403", 1.1) +
  dotsAt("B", "1098,648 1105,655 1107,641 1122,662 1112,697 1115,725 1112,740 1120,750 1110,768 1122,772 1113,795 1120,800 1117,815 1118,845 1112,865", 0.6) +
  dotsAt("C", "943,495 318,435 322,440 196,640 235,625 205,628 135,690 98,155 84,232 88,236 120,235") +
  dotsAt("D", "947,221 1262,272 776,311 720,352 722,357 728,366 740,365 755,375 1095,506 654,232 646,243 646,250 654,282 842,453 840,430 574,545", 0.95);

const MapFigure = () => (
  <svg width="898" height="556" viewBox="283 286 898 556" className="block">
    <defs>
      <clipPath id="extent"><rect x="290" y="293" width="884" height="543" /></clipPath>
    </defs>
    <rect x="283" y="286" width="898" height="556" fill="#000" />
    <rect x="290" y="293" width="884" height="543" fill="#ff9f17" />
    <g clipPath="url(#extent)">
      <path d="M441.300 293V836M630.300 293V836M819.300 293V836M1008.400 293V836M290 375.400H1174M290 564.400H1174M290 753.400H1174" stroke="#232323" strokeWidth="1" />
      <g fill="#e8718d" stroke="#232323" strokeWidth="1.100" strokeLinejoin="round" fillRule="evenodd">
        <path d={mainland} />
        {landRings.map((d, i) => <path key={i} d={d} />)}
        <path d={ring(["B", "246,86 258,82 268,77 285,80 300,83 285,88 265,90 252,90"])} fill="#ff9f17" />
        <path d={borders} fill="none" />
      </g>
      <path d={islets} fill="#232323" />
      <g fill="none" stroke="#232323" strokeWidth="1.100"><circle cx="980.600" cy="697.500" r="1.500" /><circle cx="992.900" cy="692.300" r="1.300" /></g>
    </g>
    <rect x="283.500" y="286.500" width="897" height="555" fill="none" stroke="#5a0a3c" />
    <rect x="283.500" y="286.500" width="897" height="555" fill="none" stroke="#3d9bd0" strokeDasharray="2 3" />
    {[283, 727, 1170].map((x) =>
      [286, 559, 831].map((y) =>
        x === 727 && y === 559 ? null : (
          <rect key={`${x}-${y}`} x={x + 0.5} y={y + 0.5} width="10" height="10" fill="#fff" stroke="#3a8fc4" />
        )
      )
    )}
  </svg>
);

/* ---------- rulers ---------- */

const MM = 3.877;
const range = (a: number, b: number) => Array.from({ length: (b - a) / 2 + 1 }, (_, i) => a + i * 2);

const HRuler = () => (
  <svg width="1489" height="22" viewBox="36 120 1489 22" className="block">
    {range(-38, 338).map((v) => {
      const x = Math.round(208 + v * MM);
      const y = v % 20 === 0 ? 121 : v % 10 === 0 ? 135 : 137;
      return <rect key={v} x={x} y={y} width="1" height={142 - y} fill="#55575a" />;
    })}
    {range(-20, 320).filter((v) => v % 20 === 0).map((v) => (
      <text key={v} x={Math.round(208 + v * MM) + 2} y="133" fontSize="10.300" fill="#707376" fontFamily="Noto Sans, sans-serif">{v}</text>
    ))}
    <rect x="1230" y="121" width="1" height="21" fill="#f00" />
  </svg>
);
const VRuler = () => (
  <svg width="21" height="889" viewBox="36 142 21 889" className="block">
    {range(-8, 218).map((v) => {
      const y = Math.round(175 + v * MM);
      const x = v % 20 === 0 ? 36 : v % 10 === 0 ? 50 : 52;
      return <rect key={v} x={x} y={y} width={57 - x} height="1" fill="#55575a" />;
    })}
    {range(0, 200).filter((v) => v % 20 === 0).map((v) => {
      const y = Math.round(175 + v * MM) + 4;
      return (
        <text key={v} transform={`translate(48 ${y}) rotate(-90)`} textAnchor="end" fontSize="10.300" fill="#707376" fontFamily="Noto Sans, sans-serif">{v}</text>
      );
    })}
    <rect x="36" y="1027" width="21" height="1" fill="#55575a" />
    <rect x="36" y="1030" width="21" height="1" fill="#f00" />
  </svg>
);

/* ---------- right dock ---------- */

const Check = ({ on, dim }: { on?: boolean; dim?: boolean }) => (
  <span className={`flex size-[13px] shrink-0 items-center justify-center border ${dim ? "border-[#b9bbbd] bg-[#eff0f1]" : "border-[#b3b5b7] bg-[#fcfcfc]"}`}>
    {on && <svg width="9" height="9" viewBox="0 0 9 9"><path d="M1 4.500l2.500 3L7.500.8" stroke="#222" strokeWidth="1.600" fill="none" /></svg>}
  </span>
);
const Bold = ({ children, dim }: Kids & { dim?: boolean }) => (
  <span className={`whitespace-nowrap ${dim ? "text-[#a8aaac] [-webkit-text-stroke:0.4px_#a8aaac]" : "text-[#232629] [-webkit-text-stroke:0.5px_#232629]"}`}>{children}</span>
);
const Section = ({ label, h, check, on, dim, open }: { label: string; h: string; check?: boolean; on?: boolean; dim?: boolean; open?: boolean }) => (
  <div className={`${h} flex shrink-0 items-center`}>
    <span className="ml-[14px] flex w-[17px] shrink-0">
      {open ? (
        <svg width="12" height="8" className="-ml-px"><path d="M.5.500h10.500L5.800 7.500z" fill="#31363b" /></svg>
      ) : (
        <svg width="9" height="12" className="ml-px"><path d="M.5.500v11l7-5.500z" fill={dim ? "#b0b2b4" : "#31363b"} /></svg>
      )}
    </span>
    {check && <span className="mr-[7px]"><Check on={on} dim={dim} /></span>}
    <span className={check ? "" : "ml-0.5"}><Bold dim={dim}>{label}</Bold></span>
  </div>
);
const DockTitle = ({ label, h }: { label: string; h: string }) => (
  <div className={`${h} flex shrink-0 items-center justify-between pl-1 pr-0.5`}>
    <span className="pt-0.5">{label}</span>
    <span className="flex gap-[3px]">
      <svg width="10" height="10" viewBox="0 0 10 10" fill="none" stroke="#666"><rect x=".5" y=".5" width="9" height="9" rx="1.500" /><path d="M4 2.500h3.500V6H4zM2.500 4.500v3.200H6" strokeWidth=".8" /></svg>
      <svg width="10" height="10" viewBox="0 0 10 10" fill="none" stroke="#666"><rect x=".5" y=".5" width="9" height="9" rx="1.500" /><path d="M3 3l4 4M7 3L3 7" strokeWidth="1.700" /></svg>
    </span>
  </div>
);
const Tab = ({ label, w, active }: { label: string; w: string; active?: boolean }) =>
  active ? (
    <div className={`${w} relative z-10 -mb-px flex h-[28px] items-center justify-center rounded-t-[3px] border border-b-0 border-[#b0b2b4] bg-gradient-to-b from-[#fafbfc] to-[#eff0f1] pt-0.5`}>{label}</div>
  ) : (
    <div className={`${w} mb-px flex h-[25px] items-center justify-center rounded-t-[3px] border border-[#bbbdbf] bg-[#dfe0e1] pt-1`}>{label}</div>
  );

const btn = "flex items-center rounded-[3px] border border-[#a9abad] bg-gradient-to-b from-[#fcfcfc] to-[#ececed]";
const menus: [string, string, string][] = [
  ["L", "ayout", "w-[53px]"], ["E", "dit", "w-[35px]"], ["V", "iew", "w-[41px]"], ["I", "tems", "w-[46px]"],
  ["A", "dd Item", "w-[65px]"], ["", "Atlas", "w-[41px]"], ["", "Settings", "w-[60px]"],
];
const tools = [Hand, ZoomTool, SelectTool, MoveContent, EditNodes, Map3D, AddMap, AddPic, AddLabel, AddLegend, AddScale, AddNorth, AddShape, AddMarker, AddArrow, AddNode, AddHtml, AddTable, AddManual];

const VSep = () => <span className="h-3 w-px bg-[#cfd1d3]" />;

export default function App() {
  return (
    <div className="flex h-[1062px] w-[1920px] flex-col overflow-hidden bg-[#eff0f1] font-['Noto_Sans',sans-serif] text-[12.2px] leading-none text-[#31363b]">
      {/* title bar */}
      <div className="flex h-[29px] shrink-0 items-center bg-gradient-to-b from-[#d5d9de] to-[#adb0b1]">
        <svg width="22" height="22" viewBox="0 0 22 22" className="ml-[3px] shrink-0" fill="none">
          <circle cx="11" cy="10.500" r="7.800" stroke="#6ea22d" strokeWidth="3.600" />
          <path d="M11.500 11l7 8" stroke="#7fae35" strokeWidth="4.200" />
          <path d="M11 10.500l4 4" stroke="#f3d23c" strokeWidth="2.500" /><circle cx="11" cy="10.500" r="2.200" fill="#ee7913" />
        </svg>
        <svg width="12" height="12" viewBox="0 0 12 12" className="ml-2 shrink-0"><path d="M7 .5L11.500 5l-1 .5-2 2L8 10 5.500 7.500 1 11.500.8 11 4.500 6.500 2 4l2.500-.5 2-2z" fill="#dde0e3" /></svg>
        <span className="w-[1828px] pl-0.5 pt-0.5 text-center text-[#d3d6d9]">*Layout 1</span>
        <svg width="64" height="18" viewBox="0 0 64 18" fill="none" stroke="#d9dcde" strokeWidth="1.100" className="-ml-[22px] shrink-0">
          <path d="M4 7l4 4 4-4M29 11l4-4 4 4" /><circle cx="56" cy="9" r="7.500" fill="#e3e5e7" /><path d="M53 6l6 6M59 6l-6 6" stroke="#a9acae" />
        </svg>
      </div>
      {/* menu bar */}
      <div className="flex h-[22px] shrink-0 items-center border-b border-[#cfd1d3] pl-[10px] pt-0.5">
        {menus.map(([u, rest, w]) => (
          <span key={rest} className={`${w} shrink-0 whitespace-nowrap`}><span className="underline underline-offset-2">{u}</span>{rest}</span>
        ))}
      </div>
      {/* toolbars */}
      <div className="flex h-[35px] shrink-0 items-center border-b border-[#b2b4b6] bg-gradient-to-b from-[#fbfcfd] to-[#eff0f1]">
        <Handle w="w-[10px]" />
        <Cell><Save /></Cell><Sep w="w-[5px]" />
        <Cell><NewLayout /></Cell><Cell><DupLayout /></Cell><Cell><Manager /></Cell><Cell><Folder /></Cell><Cell><SaveAs /></Cell><Sep w="w-[6px]" />
        <Cell><NewPage /></Cell><Sep w="w-1" />
        <Cell><Printer /></Cell><Cell><ExportImg /></Cell><Cell><ExportSvg /></Cell><Cell><ExportPdf /></Cell><Cell><Undo /></Cell><Cell><Redo /></Cell>
        <Handle w="w-3 pl-1" />
        <Cell><AtlasIcon /></Cell><Cell><Arrow dir="l" bar /></Cell><Cell><Arrow dir="l" /></Cell>
        <div className="flex h-[30px] w-[71px] shrink-0 overflow-hidden rounded-[3px] border border-[#a5a7a9] bg-[#f0f0f0]">
          <span className="flex flex-1 items-center pl-1 pt-0.5 text-[#d2b096]">1</span>
          <span className="flex w-[22px] items-center justify-center bg-gradient-to-b from-[#f8f8f9] to-[#e6e7e8]"><Chevron c="#a9abad" /></span>
        </div>
        <Cell><Arrow dir="r" /></Cell><Cell><Arrow dir="r" bar /></Cell><Cell><Printer gray /></Cell><Cell><ExportImg gray /></Cell>
        <span className="flex w-[11px] justify-center"><Chevron c="#a9abad" /></span>
        <Cell><AtlasIcon tool /></Cell>
      </div>
      <div className="flex h-[34px] shrink-0 items-center border-b border-[#b2b4b6] bg-gradient-to-b from-[#f9fafb] to-[#eff0f1] pt-px">
        <Handle w="w-[10px]" />
        <Cell><ZoomIn /></Cell><Cell><ZoomOut /></Cell><Cell><ZoomOne /></Cell><Cell><ZoomFull /></Cell><Cell><Refresh /></Cell>
        <Handle w="w-[13px] pl-1" />
        <Cell><Lock /></Cell><Cell><Lock open /></Cell><Cell><Group /></Cell><Cell><Ungroup /></Cell><Cell><Raise /></Cell><Cell><Align /></Cell><Cell><Distribute /></Cell><Cell><Resize /></Cell>
      </div>

      <div className="flex h-[911px] shrink-0">
        {/* tool box */}
        <div className="flex w-9 shrink-0 flex-col items-center border-r border-[#b2b4b6] bg-gradient-to-r from-[#fafbfc] to-[#eceded] pl-px">
          <svg width="17" height="9" className="mt-px block shrink-0"><path d="M0 2.500h17M0 5.500h17" stroke="#b4b6b8" strokeDasharray="1 2" /></svg>
          {tools.map((T, i) => (
            <div key={i} className={`flex h-[31.05px] w-8 shrink-0 items-center justify-center ${i === 2 ? "rounded-[3px] border border-[#b0b2b4] bg-[#dcddde]" : ""}`}><T /></div>
          ))}
        </div>

        {/* layout view */}
        <div className="flex w-[1489px] shrink-0 flex-col">
          <HRuler />
          <div className="flex h-[889px]">
            <VRuler />
            <div className="relative w-[1455px] shrink-0 overflow-hidden border-b border-[#b8babc] bg-[#d7d7d7]">
              <div className="absolute left-[158px] top-[40px] h-[814px] w-[1151px] bg-[#969696]" />
              <div className="absolute left-[151px] top-[33px] h-[815px] w-[1152px] bg-white" />
              <div className="absolute left-[226px] top-[144px]"><MapFigure /></div>
            </div>
            <div className="flex w-[13px] shrink-0 flex-col border-l border-[#bcbec0] bg-gradient-to-r from-[#fdfdfd] to-[#f1f1f2]">
              <span className="flex h-[13px] items-center justify-center border-b border-[#bcbec0]"><span className="rotate-180"><Chevron /></span></span>
              <span className="h-6 border-b border-[#bcbec0] bg-[#e6e8e8]" />
              <span className="flex-1" />
              <span className="h-4 border-y border-[#bcbec0] bg-[#e6e8e8]" />
              <span className="flex h-3 items-center justify-center"><Chevron /></span>
            </div>
          </div>
        </div>

        {/* docks */}
        <div className="ml-[5px] flex w-[390px] shrink-0 flex-col">
          <div className="flex h-[29px] shrink-0 items-end border-b border-[#b0b2b4]">
            <Tab label="Items" w="w-[55px]" active /><Tab label="Undo History" w="w-[98px]" />
          </div>
          <DockTitle label="Items" h="h-[17px]" />
          <div className="flex h-[239px] shrink-0 flex-col border border-[#b0b2b4] bg-[#fcfcfc]">
            <div className="flex h-[19px] shrink-0 items-center border-b border-[#b0b2b4] bg-gradient-to-b from-[#fbfbfc] to-[#ececed]">
              <span className="flex h-full w-9 items-center border-r border-[#c5c7c9] pl-0.5">
                <svg width="14" height="10" viewBox="0 0 14 10" fill="none"><path d="M.5 5Q7-1.500 13.500 5 7 10.500.5 5z" fill="#f4f4f4" stroke="#8d8f8d" /><path d="M1 2.500Q7-2 13 3" stroke="#9a9c9a" /><circle cx="7" cy="5" r="2.800" fill="#555" /></svg>
              </span>
              <span className="flex h-full w-9 items-center border-r border-[#c5c7c9] pl-[3px] pt-px">
                <svg width="12" height="14" viewBox="0 0 12 14" fill="none"><path d="M2.500 7V4a3.500 3.500 0 0 1 7 0v3" stroke="#777" strokeWidth="1.500" /><rect x=".5" y="6" width="11" height="7.500" rx="1" fill="#666" /></svg>
              </span>
              <span className="pl-px pt-0.5">Item</span>
            </div>
            <div className="flex h-[18px] items-center pl-[3px]">
              <Check on /><span className="ml-[23px]"><Check /></span>
              <svg width="14" height="12" viewBox="0 0 14 12" className="ml-[23px] mr-[7px]"><rect x="1.500" y=".5" width="12" height="11" fill="#d0d1d1" stroke="#a0a2a2" /><path d="M2.500 0v11" stroke="#f4f4f4" strokeWidth="2" /></svg>
              <Bold>Map 1</Bold>
            </div>
          </div>
          <div className="flex h-[33px] shrink-0 flex-col border-b border-[#b0b2b4]">
            <svg width="17" height="4" className="mx-auto block shrink-0"><path d="M0 2.500h17" stroke="#b4b6b8" strokeDasharray="1 2" /></svg>
            <div className="flex h-[28px] shrink-0 items-end">
              <Tab label="Layout" w="w-[62px]" /><Tab label="Item Properties" w="w-[110px]" active /><Tab label="Guides" w="w-[62px]" />
            </div>
          </div>
          <DockTitle label="Item Properties" h="h-[17px]" />
          <div className="flex h-[21px] shrink-0 items-center bg-[#c6c6c6] pl-[5px] pt-0.5"><Bold>Map 1</Bold></div>
          <div className="flex h-[27px] shrink-0 items-center pb-px pl-1.5">
            <Refresh size={16} />
            <span className="flex w-[13px] justify-center"><VSep /></span>
            <Frame k="in" /><span className="w-2" /><Frame k="out" />
            <span className="flex w-[12px] justify-center"><VSep /></span>
            <Frame k="nin" /><span className="w-[9px]" /><Frame k="nout" />
            <span className="flex w-[13px] justify-center"><VSep /></span>
            <Ic size={16}><MapArt /><path d="M13 2h5v9l-2.500 2L13 11z" fill="#5580b4" /><Drop /></Ic>
            <span className="w-2" />
            <Ic size={16}><MapArt /><path d="M14 3l4 4h-8zM14 21l4-4h-8zM5 12l4-4v8zM23 12l-4-4v8zM12 10h4v4h-4z" fill="#4a78ad" /></Ic>
            <span className="flex w-[13px] justify-center"><VSep /></span>
            <svg width="15" height="16" viewBox="0 0 15 16"><path d="M3 4.500h11v7H3L.8 8z" fill="#fce94f" stroke="#c4a000" /><text x="3" y="10.500" fontSize="6.500" fontWeight="bold" fill="#444" fontFamily="Liberation Sans">abc</text></svg>
            <span className="w-[9px]" />
            <Ic size={16}><circle cx="15.500" cy="8" r="6.500" fill="#b4ccb6" stroke="#7d9d80" strokeDasharray="2 1.500" /><circle cx="8" cy="15.500" r="6.500" fill="#b4ccb6" stroke="#7d9d80" strokeDasharray="2 1.500" /><path d="M9 9h6v6H9z" fill="#5b88ad" /></Ic>
          </div>
          <div className="flex h-[528px] shrink-0 flex-col border border-[#b0b2b4] pt-[7px]">
            <Section label="Main Properties" h="h-7" />
            <Section label="Layers" h="h-7" />
            <Section label="Extents" h="h-[29px]" />
            <Section label="Temporal Range" h="h-7" check />
            <Section label="Controlled by Atlas" h="h-7" check dim />
            <Section label="Grids" h="h-7" />
            <Section label="Overviews" h="h-7" />
            <Section label="Position and Size" h="h-7" />
            <Section label="Rotation" h="h-7" />
            <Section label="Frame" h="h-[17px]" check on open />
            <div className="ml-3 mt-0.5 flex h-[109px] w-[365px] shrink-0 flex-col rounded-[2px] border border-[#d4d6d8] bg-[#ebecee] pl-[9px] pt-[9px]">
              <div className="flex h-[28px] items-center">
                <span className="w-[60px] pt-0.5">Color</span>
                <span className={`${btn} h-[28px] w-[238px] px-1`}><span className="h-4 w-full rounded-[3px] bg-black" /></span>
                <span className={`${btn} h-[28px] w-[11px] justify-center`}><Chevron /></span>
                <svg width="23" height="18" viewBox="0 0 23 18" className="ml-2" fill="none"><path d="M6 3L.8 9 6 15z" fill="#8a8c8e" stroke="#666" /><rect x="5.500" y="1.500" width="12" height="15" fill="#fff" stroke="#777" /><path d="M8 5.500h7.500M5.500 9h12M8 12.500h7.500" stroke="#666" strokeWidth="1.300" /><path d="M16 13h6.500l-3.200 3.500z" fill="#777" /></svg>
              </div>
              <div className="mt-[5px] flex h-[25px] items-center">
                <span className="w-[60px] whitespace-nowrap pt-0.5">Thickness</span>
                <span className="flex h-[22px] w-[229px] items-center rounded-[3px] border border-[#a9abad] bg-[#fcfcfc] pl-[5px]">
                  <span className="flex-1 pt-0.5">1.70</span>
                  <span className="flex h-full w-[13px] flex-col items-center justify-center gap-1 border-l border-[#a9abad]"><span className="rotate-180"><Chevron /></span><Chevron /></span>
                </span>
                <span className={`${btn} ml-[5px] h-[25px] w-[50px] justify-between pl-[5px] pr-[7px]`}><span className="pt-0.5">mm</span><Chevron /></span>
              </div>
              <div className="mt-[5px] flex h-[25px] items-center">
                <span className="w-[60px] whitespace-nowrap pt-0.5">Join style</span>
                <span className={`${btn} h-[25px] w-[284px] pl-[5px] pr-[7px]`}>
                  <svg width="14" height="14" viewBox="0 0 14 14"><path d="M0 1h13v12.500H5V9H0z" fill="#5d86b5" /><path d="M0 1h13v12.500M0 9h5v4.500" stroke="#222" fill="none" strokeWidth="1.200" /><path d="M1 5.500h8v8" stroke="#e0d24c" strokeDasharray="1.500 1.500" fill="none" strokeWidth="1.500" /></svg>
                  <span className="ml-[5px] flex-1 pt-0.5">Miter</span><Chevron />
                </span>
              </div>
            </div>
            <Section label="Background" h="h-[26px] pt-[3px]" check on />
            <Section label="Item ID" h="h-[22px]" />
            <Section label="Rendering" h="h-[22px]" />
            <Section label="Variables" h="h-[22px]" />
          </div>
        </div>
      </div>

      {/* status bar */}
      <div className="flex h-[31px] shrink-0 items-center pl-1.5 pt-[3px]">
        <span className="w-[1351px]">1 item selected</span>
        <span className="w-[106px] whitespace-nowrap">x: 263.625 mm</span>
        <span className="w-[106px] whitespace-nowrap">y: 10.5472 mm</span>
        <span className="w-[106px]">page: 1</span>
        <span className="-mt-[3px] flex h-6 w-[116px] items-center rounded-[3px] border border-[#a9abad] bg-[#fcfcfc]">
          <span className="flex-1 pl-1 pt-0.5">109.4%</span>
          <span className="flex h-full w-5 items-center justify-center bg-gradient-to-b from-[#fcfcfc] to-[#ececed]"><Chevron /></span>
        </span>
        <span className="-mt-[5px] ml-[7px] flex w-[98px] items-center">
          <span className="h-1 w-[10px] rounded-l bg-[#3daee9]" />
          <span className="size-3 rounded-[3px] border border-[#a9abad] bg-[#fcfcfc]" />
          <span className="h-1 flex-1 rounded-r border border-[#b5b7b9] bg-[#d5d7d9]" />
        </span>
        <svg width="12" height="12" className="ml-auto self-end"><path d="M0 10.500h12M3 7.500h9M6 4.500h6M9 1.500h3" stroke="#aaacae" strokeDasharray="1 2" /></svg>
      </div>
    </div>
  );
}
